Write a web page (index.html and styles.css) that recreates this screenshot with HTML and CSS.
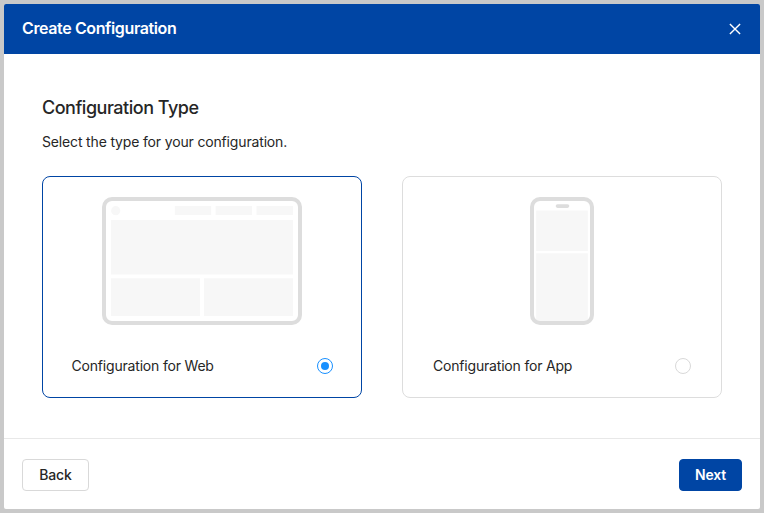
FILE: index.html
```html
<!DOCTYPE html>
<html lang="en">
<head>
<meta charset="utf-8">
<title>Create Configuration</title>
<link rel="stylesheet" href="styles.css">
</head>
<body>
<div class="modal" role="dialog" aria-labelledby="modal-title">
  <header class="modal-header">
    <h1 class="modal-title" id="modal-title">Create Configuration</h1>
    <button class="close" aria-label="Close">
      <svg width="12" height="12" viewBox="0 0 12 12"><path d="M.9.9l10.2 10.2M11.1.9L.9 11.1" stroke="#fff" stroke-width="1.4" fill="none"/></svg>
    </button>
  </header>
  <main class="modal-body">
    <h2 class="heading">Configuration Type</h2>
    <p class="hint">Select the type for your configuration.</p>
    <div class="options">
      <label class="card card-selected">
        <svg class="art" width="200" height="128" viewBox="0 0 200 128">
          <rect x="2" y="2" width="196" height="124" rx="8" fill="#fff" stroke="#ddd" stroke-width="4"/>
          <g fill="#f7f7f7">
            <circle cx="13.7" cy="13.7" r="4.6"/>
            <path d="M72.8 9h36.4v9H72.8zM113.6 9H150v9h-36.4zM154.5 9H191v9h-36.5z"/>
            <path d="M9 23h182v54.6H9zM9 81.3h89v37.6H9zM102 81.3h89v37.6h-89z"/>
          </g>
        </svg>
        <span class="choice"><span class="choice-text">Configuration for Web</span><span class="radio radio-on"></span></span>
      </label>
      <label class="card">
        <svg class="art" width="64" height="128" viewBox="0 0 64 128">
          <rect x="2" y="2" width="60" height="124" rx="8" fill="#fff"/>
          <rect x="25.7" y="7.2" width="13.6" height="3.7" rx="1.8" fill="#ddd"/>
          <path d="M6.2 13.6h51.6V54H6.2zM6.2 56.2h51.6V124H6.2z" fill="#f7f7f7"/>
          <rect x="2" y="2" width="60" height="124" rx="8" fill="none" stroke="#ddd" stroke-width="4"/>
        </svg>
        <span class="choice choice-app"><span class="choice-text">Configuration for App</span><span class="radio"></span></span>
      </label>
    </div>
  </main>
  <footer class="modal-footer">
    <button class="btn">Back</button>
    <button class="btn btn-primary">Next</button>
  </footer>
</div>
</body>
</html>
```
FILE: styles.css
```css
* { box-sizing: border-box; }
body {
  margin: 0;
  padding: 4px;
  height: 513px;
  background: #c9c9c9;
  font-family: Inter, "Liberation Sans", sans-serif;
  font-size: 14px;
  line-height: 22px;
  color: #262626;
}
.modal {
  display: flex;
  flex-direction: column;
  height: 505px;
  background: #fff;
  border-radius: 2px;
  overflow: hidden;
}
.modal-header {
  display: flex;
  align-items: center;
  justify-content: space-between;
  height: 50px;
  padding: 0 19px 0 18px;
  background: #0045a4;
  color: #fff;
}
.modal-title {
  margin: 0 0 2px;
  font-size: 16px;
  font-weight: 600;
  line-height: 24px;
  letter-spacing: -0.38px;
  white-space: nowrap;
}
.close {
  display: flex;
  padding: 0;
  border: 0;
  background: none;
}
.modal-body {
  flex: 1;
  padding: 40px 38px 0;
}
.heading {
  margin: 0;
  font-size: 18px;
  font-weight: 500;
  line-height: 28px;
  letter-spacing: -0.48px;
}
.hint {
  margin: 9px 0 23px;
  letter-spacing: -0.16px;
}
.options {
  display: flex;
  gap: 40px;
}
.card {
  display: flex;
  flex-direction: column;
  align-items: center;
  width: 320px;
  height: 222px;
  padding-top: 20px;
  border: 1px solid #ddd;
  border-radius: 8px;
}
.card-selected { border-color: #0045a4; }
.art { display: block; }
.choice {
  display: flex;
  align-items: center;
  justify-content: space-between;
  align-self: stretch;
  margin-top: 30px;
  padding: 0 28px 0 28.5px;
}
.choice-app { padding: 0 30px; }
.choice-text { letter-spacing: -0.19px; }
.radio {
  display: flex;
  width: 16px;
  height: 16px;
  border: 1px solid #d9d9d9;
  border-radius: 50%;
}
.radio-on { border-color: #1890ff; }
.radio-on::before {
  content: "";
  width: 8px;
  height: 8px;
  margin: auto;
  border-radius: 50%;
  background: #1890ff;
}
.modal-footer {
  display: flex;
  align-items: center;
  justify-content: space-between;
  height: 71px;
  padding: 2px 18px 0;
  border-top: 1px solid #e8e8e8;
}
.btn {
  width: 67px;
  height: 32px;
  padding: 0;
  border: 1px solid #d9d9d9;
  border-radius: 4px;
  background: #fff;
  color: #262626;
  font: 500 14px/22px Inter, "Liberation Sans", sans-serif;
  letter-spacing: -0.15px;
}
.btn-primary {
  width: 63px;
  border-color: #0045a4;
  background: #0045a4;
  color: #fff;
  font-weight: 600;
}
```
